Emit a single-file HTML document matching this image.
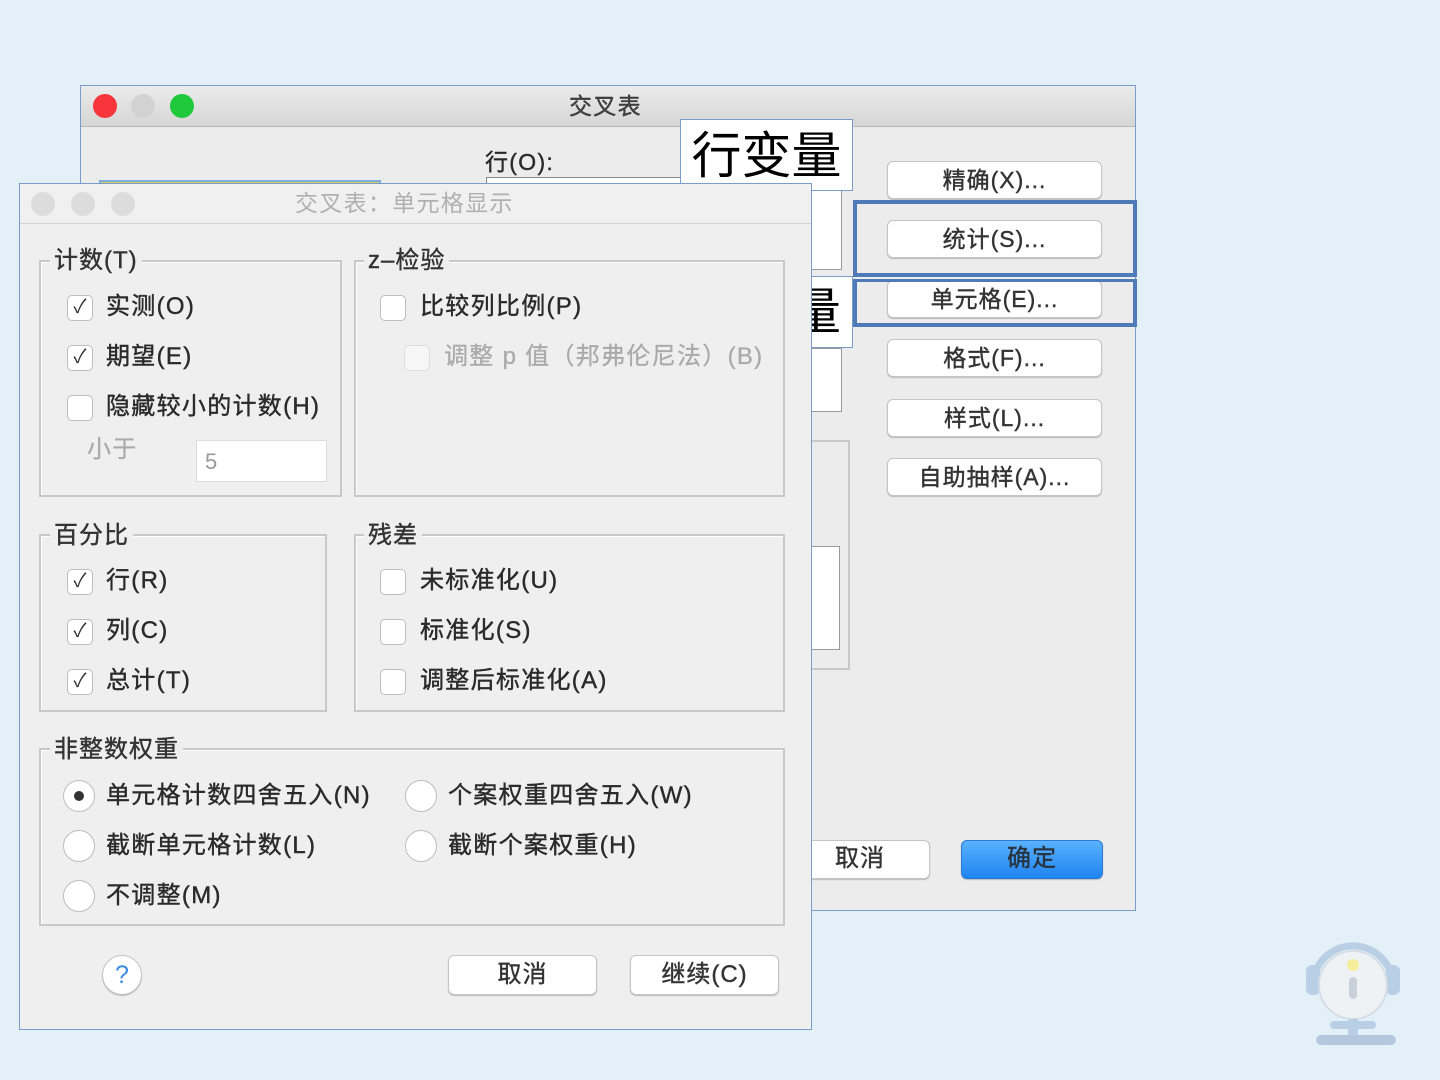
<!DOCTYPE html>
<html><head><meta charset="utf-8">
<style>
*{margin:0;padding:0;box-sizing:border-box}
body{width:1440px;height:1080px;background:#e3f0f7;position:relative;overflow:hidden;font-family:"Liberation Sans","Noto Sans CJK SC",sans-serif;color:#222}
.a{position:absolute}
.win{left:80px;top:85px;width:1056px;height:826px;background:#ececec;border:1px solid #7a9cc8}
.tb{left:0;top:0;width:100%;height:41px;background:linear-gradient(#ebebeb,#d6d6d6);border-bottom:1px solid #b8b8b8}
.dot{width:24px;height:24px;border-radius:50%}
.btn{background:#fff;border:1px solid #c4c4c4;border-radius:6px;box-shadow:0 1px 1px #bbb;text-align:center;font-size:23px;letter-spacing:1px;line-height:36px;color:#333;-webkit-text-stroke:0.4px #333}
.dlg{left:19px;top:183px;width:793px;height:847px;background:#efefef;border:1px solid #7a9cc8}
.grp{border:2px solid #c8c8c8;box-shadow:inset 1px 1px 0 #fff}
.lg{background:#efefef;padding:0 4px;font-size:24px;letter-spacing:1px;line-height:26px;color:#333;-webkit-text-stroke:0.4px #333}
.cb{width:26px;height:26px;background:#fff;border:1px solid #bdbdbd;border-radius:5px;font-size:19px;line-height:24px;text-align:center;color:#333}
.rb{width:32px;height:32px;background:#fff;border:1px solid #bdbdbd;border-radius:50%}
.t{font-size:24px;letter-spacing:1.3px;line-height:28px;color:#2a2a2a;white-space:nowrap;-webkit-text-stroke:0.4px #2a2a2a}
.g{color:#aaa;-webkit-text-stroke:0.3px #aaa}
</style></head><body>

<div class="a win">
  <div class="a tb"></div>
  <div class="a dot" style="left:12px;top:8px;background:#f8353b"></div>
  <div class="a dot" style="left:50px;top:8px;background:#d2d2d2"></div>
  <div class="a dot" style="left:89px;top:8px;background:#1fc93a"></div>
  <div class="a t" style="left:488px;top:6px;font-size:23px;color:#444">交叉表</div>
  <div class="a t" style="left:404px;top:62px;font-size:23px">行(O):</div>
  <div class="a" style="left:405px;top:91px;width:320px;height:12px;border:1px solid #888;border-bottom:none;background:#fff"></div>
  <div class="a" style="left:18px;top:94px;width:282px;height:10px;background:#e2c45a;border:2px solid #7ab0e0"></div>
  <div class="a" style="left:725px;top:104px;width:36px;height:80px;background:#fff;border:1px solid #999"></div>
  <div class="a" style="left:725px;top:262px;width:36px;height:64px;background:#fff;border:1px solid #999"></div>
  <div class="a" style="left:725px;top:354px;width:44px;height:230px;border:2px solid #c8c8c8"></div>
  <div class="a" style="left:725px;top:460px;width:34px;height:104px;background:#fff;border:1px solid #999"></div>
  <div class="a btn" style="left:806px;top:75px;width:215px;height:38px">精确(X)...</div>
  <div class="a btn" style="left:806px;top:134px;width:215px;height:38px">统计(S)...</div>
  <div class="a btn" style="left:806px;top:194px;width:215px;height:38px">单元格(E)...</div>
  <div class="a btn" style="left:806px;top:253px;width:215px;height:38px">格式(F)...</div>
  <div class="a btn" style="left:806px;top:313px;width:215px;height:38px">样式(L)...</div>
  <div class="a btn" style="left:806px;top:372px;width:215px;height:38px">自助抽样(A)...</div>
  <div class="a btn" style="left:720px;top:754px;width:129px;height:39px;font-size:24px;text-align:right;padding-right:44px">取消</div>
  <div class="a btn" style="left:880px;top:754px;width:142px;height:39px;font-size:24px;background:linear-gradient(#5ab2ff,#1f84f0);border-color:#2a7ad8;color:#234">确定</div>
</div>
<div class="a" style="left:853px;top:200px;width:284px;height:77px;border:4px solid #4e7ab8"></div>
<div class="a" style="left:853px;top:279px;width:284px;height:48px;border:4px solid #4e7ab8;border-top-width:3px"></div>
<div class="a" style="left:680px;top:119px;width:173px;height:72px;background:#fff;border:1px solid #7a9cc8;font-size:50px;line-height:72px;text-align:center;color:#000">行变量</div>
<div class="a" style="left:790px;top:276px;width:63px;height:72px;background:#fff;border:1px solid #7a9cc8;font-size:50px;line-height:70px;color:#000;overflow:hidden;text-align:right;padding-right:14px">量</div>

<div class="a dlg">
  <div class="a" style="left:0;top:0;width:100%;height:40px;background:#f0f0f0;border-bottom:1px solid #d4d4d4"></div>
  <div class="a dot" style="left:11px;top:8px;background:#dcdcdc"></div>
  <div class="a dot" style="left:51px;top:8px;background:#dcdcdc"></div>
  <div class="a dot" style="left:91px;top:8px;background:#dcdcdc"></div>
  <div class="a t" style="left:275px;top:5px;font-size:23px;color:#b0b0b0;-webkit-text-stroke:0">交叉表：单元格显示</div>

  <div class="a grp" style="left:19px;top:76px;width:303px;height:237px"></div>
  <div class="a lg" style="left:30px;top:64px">计数(T)</div>
  <div class="a cb" style="left:47px;top:111px">✓</div><div class="a t" style="left:86px;top:109px">实测(O)</div>
  <div class="a cb" style="left:47px;top:161px">✓</div><div class="a t" style="left:86px;top:159px">期望(E)</div>
  <div class="a cb" style="left:47px;top:211px"></div><div class="a t" style="left:86px;top:209px">隐藏较小的计数(H)</div>
  <div class="a t g" style="left:67px;top:252px">小于</div>
  <div class="a" style="left:176px;top:256px;width:131px;height:42px;background:#fff;border:1px solid #ddd;font-size:22px;line-height:42px;padding-left:8px;color:#999">5</div>

  <div class="a grp" style="left:334px;top:76px;width:431px;height:237px"></div>
  <div class="a lg" style="left:344px;top:64px">z–检验</div>
  <div class="a cb" style="left:360px;top:111px"></div><div class="a t" style="left:400px;top:109px">比较列比例(P)</div>
  <div class="a cb" style="left:384px;top:161px;background:#f6f6f6;border-color:#ddd"></div><div class="a t g" style="left:424px;top:159px">调整 p 值（邦弗伦尼法）(B)</div>

  <div class="a grp" style="left:19px;top:350px;width:288px;height:178px"></div>
  <div class="a lg" style="left:30px;top:339px">百分比</div>
  <div class="a cb" style="left:47px;top:385px">✓</div><div class="a t" style="left:86px;top:383px">行(R)</div>
  <div class="a cb" style="left:47px;top:435px">✓</div><div class="a t" style="left:86px;top:433px">列(C)</div>
  <div class="a cb" style="left:47px;top:485px">✓</div><div class="a t" style="left:86px;top:483px">总计(T)</div>

  <div class="a grp" style="left:334px;top:350px;width:431px;height:178px"></div>
  <div class="a lg" style="left:344px;top:339px">残差</div>
  <div class="a cb" style="left:360px;top:385px"></div><div class="a t" style="left:400px;top:383px">未标准化(U)</div>
  <div class="a cb" style="left:360px;top:435px"></div><div class="a t" style="left:400px;top:433px">标准化(S)</div>
  <div class="a cb" style="left:360px;top:485px"></div><div class="a t" style="left:400px;top:483px">调整后标准化(A)</div>

  <div class="a grp" style="left:19px;top:564px;width:746px;height:178px"></div>
  <div class="a lg" style="left:30px;top:553px">非整数权重</div>
  <div class="a rb" style="left:43px;top:596px"><div class="a" style="left:10px;top:10px;width:10px;height:10px;border-radius:50%;background:#333"></div></div><div class="a t" style="left:86px;top:598px">单元格计数四舍五入(N)</div>
  <div class="a rb" style="left:43px;top:646px"></div><div class="a t" style="left:86px;top:648px">截断单元格计数(L)</div>
  <div class="a rb" style="left:43px;top:696px"></div><div class="a t" style="left:86px;top:698px">不调整(M)</div>
  <div class="a rb" style="left:385px;top:596px"></div><div class="a t" style="left:428px;top:598px">个案权重四舍五入(W)</div>
  <div class="a rb" style="left:385px;top:646px"></div><div class="a t" style="left:428px;top:648px">截断个案权重(H)</div>

  <div class="a" style="left:82px;top:771px;width:40px;height:40px;border-radius:50%;background:#fff;border:1px solid #c4c4c4;box-shadow:0 1px 1px #bbb;text-align:center;font-size:25px;line-height:38px;color:#3a8be0">?</div>
  <div class="a btn" style="left:428px;top:771px;width:149px;height:40px;font-size:24px;line-height:38px">取消</div>
  <div class="a btn" style="left:610px;top:771px;width:149px;height:40px;font-size:24px;line-height:38px">继续(C)</div>
</div>

<svg class="a" style="left:1300px;top:925px" width="110" height="130" viewBox="0 0 110 130">
  <path d="M14 52 A40 40 0 0 1 92 52" fill="none" stroke="#b9cfe6" stroke-width="7"/>
  <rect x="6" y="40" width="14" height="30" rx="6" fill="#b9cfe6"/>
  <rect x="86" y="40" width="14" height="30" rx="6" fill="#b9cfe6"/>
  <circle cx="53" cy="60" r="34" fill="#eef2f5" stroke="#d4dde6" stroke-width="2"/>
  <circle cx="53" cy="40" r="6" fill="#f4ee9a"/>
  <rect x="49" y="52" width="8" height="22" rx="4" fill="#c9d2da"/>
  <rect x="48" y="94" width="10" height="16" fill="#b9cfe6"/>
  <rect x="30" y="96" width="46" height="8" rx="4" fill="#b9cfe6"/>
  <rect x="16" y="110" width="80" height="10" rx="5" fill="#b3c8de"/>
</svg>
</body></html>
